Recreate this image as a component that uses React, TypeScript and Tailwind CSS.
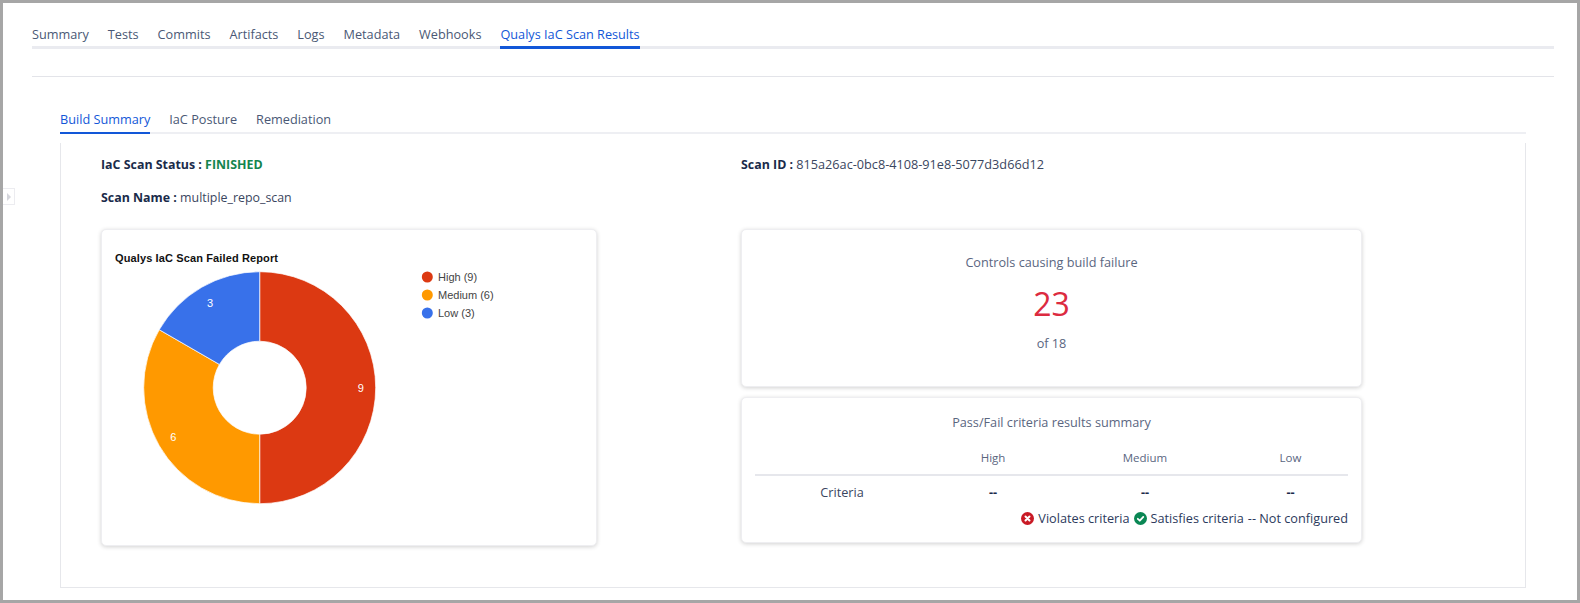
const mainTabs = ["Summary", "Tests", "Commits", "Artifacts", "Logs", "Metadata", "Webhooks", "Qualys IaC Scan Results"];
const subTabs = ["Build Summary", "IaC Posture", "Remediation"];

const arc = (startDeg: number, endDeg: number) => {
  const cx = 157.7;
  const cy = 157.7;
  const r = 116;
  const ir = 46.5;
  const pt = (rad: number, deg: number) => {
    const a = (deg * Math.PI) / 180;
    return `${(cx + rad * Math.sin(a)).toFixed(2)} ${(cy - rad * Math.cos(a)).toFixed(2)}`;
  };
  const large = endDeg - startDeg > 180 ? 1 : 0;
  return `M${pt(r, startDeg)} A${r} ${r} 0 ${large} 1 ${pt(r, endDeg)} L${pt(ir, endDeg)} A${ir} ${ir} 0 ${large} 0 ${pt(ir, startDeg)} Z`;
};

const DonutChart = () => (
  <svg width="494" height="315" viewBox="0 0 494 315" className="block" fontFamily="'Liberation Sans', Arial, sans-serif">
    <text x="13" y="32" fontSize="11" fontWeight="700" fill="#111" textLength="163">Qualys IaC Scan Failed Report</text>
    <path d={arc(0, 180)} fill="#dc3912" stroke="#fff" strokeWidth="0.7" />
    <path d={arc(180, 300)} fill="#ff9900" stroke="#fff" strokeWidth="0.7" />
    <path d={arc(300, 360)} fill="#3871ea" stroke="#fff" strokeWidth="0.7" />
    <text x="258.7" y="161.7" fontSize="11" fill="#fff" textAnchor="middle">9</text>
    <text x="71.3" y="211" fontSize="11" fill="#fff" textAnchor="middle">6</text>
    <text x="108" y="76.7" fontSize="11" fill="#fff" textAnchor="middle">3</text>
    <circle cx="325.3" cy="47" r="5.5" fill="#dc3912" />
    <circle cx="325.3" cy="65" r="5.5" fill="#ff9900" />
    <circle cx="325.3" cy="83" r="5.5" fill="#3871ea" />
    <text x="336" y="51" fontSize="11" fill="#444">High (9)</text>
    <text x="336" y="69" fontSize="11" fill="#444">Medium (6)</text>
    <text x="336" y="87" fontSize="11" fill="#444">Low (3)</text>
  </svg>
);

const ViolatesIcon = () => (
  <svg width="13" height="13" viewBox="0 0 13 13" className="shrink-0">
    <circle cx="6.5" cy="6.5" r="6.5" fill="#c91a25" />
    <path d="M4.5 4.5l4 4M8.5 4.5l-4 4" stroke="#fff" strokeWidth="2" strokeLinecap="round" />
  </svg>
);

const SatisfiesIcon = () => (
  <svg width="13" height="13" viewBox="0 0 13 13" className="shrink-0">
    <circle cx="6.5" cy="6.5" r="6.5" fill="#0a8754" />
    <path d="M3.8 6.8l2 1.9 3.5-3.8" stroke="#fff" strokeWidth="1.8" fill="none" strokeLinecap="round" strokeLinejoin="round" />
  </svg>
);

export default function App() {
  return (
    <div className="relative h-[603px] w-[1580px] overflow-hidden border-x-[3px] border-y-[3px] border-[#a6a6a6] bg-white font-['Open_Sans','Noto_Sans',sans-serif] text-[12.7px] text-[#1a2b4a]">
      {/* sidebar toggle */}
      <div className="absolute left-0 top-[185px] flex h-[17px] w-[12px] items-center justify-center border border-l-0 border-[#ececf0] bg-white">
        <div className="h-0 w-0 border-y-[4px] border-l-[4px] border-y-transparent border-l-[#d5d6dc]"></div>
      </div>

      <div className="pl-[29px] pr-[23px]">
        <div className="flex h-[46px] items-end gap-[19px] border-b-[3px] border-[#eaebf0] pt-[20px]">
          {mainTabs.map((tab) => (
            <div
              key={tab}
              className={
                tab === "Qualys IaC Scan Results"
                  ? "-mb-[3px] h-[25px] border-b-[3px] border-[#1257d8] text-[12.7px] leading-[21px] font-medium text-[#1257d8]"
                  : "-mb-[3px] h-[25px] text-[12.7px] leading-[21px] font-medium text-[#4a5875]"
              }
            >
              {tab}
            </div>
          ))}
        </div>
        <div className="mt-[27px] h-[1px] bg-[#e3e4e9]"></div>
      </div>

      <div className="ml-[57px] mr-[51px] mt-[28px]">
        <div className="flex h-[29px] gap-[19px] border-b-2 border-[#eeeff3]">
          {subTabs.map((tab) => (
            <div
              key={tab}
              className={
                tab === "Build Summary"
                  ? "h-[29px] border-b-2 border-[#1257d8] pt-[4px] text-[12.7px] leading-[21px] font-medium text-[#1257d8]"
                  : "h-[29px] pt-[4px] text-[12.7px] leading-[21px] font-medium text-[#4a5875]"
              }
            >
              {tab}
            </div>
          ))}
        </div>

        <div className="mt-[9px] h-[445px] border-x border-b border-[#e6e7eb] pl-[40px] pr-[40px]">
          <div className="flex h-[86px] pt-[12px]">
            <div className="w-[640px]">
              <div className="h-[33px] leading-[18px]">
                <span className="text-[12.4px] font-bold">IaC Scan Status : </span>
                <span className="text-[12.4px] font-bold text-[#14854f]">FINISHED</span>
              </div>
              <div className="leading-[18px]">
                <span className="text-[12.4px] font-bold">Scan Name : </span>
                <span className="text-[12.4px] text-[#3a4660]">multiple_repo_scan</span>
              </div>
            </div>
            <div className="leading-[18px]">
              <span className="text-[12.4px] font-bold">Scan ID : </span>
              <span className="text-[#3a4660]">815a26ac-0bc8-4108-91e8-5077d3d66d12</span>
            </div>
          </div>

          <div className="flex items-start">
            <div className="h-[317px] w-[496px] rounded-[5px] border border-[#eeeef1] bg-white shadow-[0_1px_4px_rgba(0,0,0,0.18)]">
              <DonutChart />
            </div>

            <div className="ml-[144px] flex w-[621px] flex-col gap-[10px]">
              <div className="flex h-[158px] flex-col items-center rounded-[5px] border border-[#eeeef1] bg-white pt-[22px] text-[#5a667f] shadow-[0_1px_4px_rgba(0,0,0,0.18)]">
                <div className="font-medium leading-[20px]">Controls causing build failure</div>
                <div className="mt-[10px] text-[32px] leading-[44px] text-[#dc2b40]">23</div>
                <div className="mt-[7px] leading-[20px]">of 18</div>
              </div>

              <div className="h-[146px] rounded-[5px] border border-[#eeeef1] bg-white px-[13px] pt-[14px] shadow-[0_1px_4px_rgba(0,0,0,0.18)]">
                <div className="text-center font-medium leading-[20px] text-[#5a667f]">Pass/Fail criteria results summary</div>
                <div className="mt-[17px] grid h-[27px] grid-cols-[174px_128px_176px_1fr] border-b-2 border-[#e6e7ec] text-center text-[11.5px] leading-[18px] font-medium text-[#5a667f]">
                  <div></div>
                  <div>High</div>
                  <div>Medium</div>
                  <div>Low</div>
                </div>
                <div className="grid h-[33px] grid-cols-[174px_128px_176px_1fr] items-center text-center text-[#3a4660]">
                  <div>Criteria</div>
                  <div className="font-bold text-[#1a2b4a]">--</div>
                  <div className="font-bold text-[#1a2b4a]">--</div>
                  <div className="font-bold text-[#1a2b4a]">--</div>
                </div>
                <div className="flex items-center justify-end gap-[4px] text-[12.7px] leading-[18px] text-[#2c3a5c]">
                  <ViolatesIcon />
                  <span>Violates criteria</span>
                  <SatisfiesIcon />
                  <span>Satisfies criteria</span>
                  <span>-- Not configured</span>
                </div>
              </div>
            </div>
          </div>
        </div>
      </div>
    </div>
  );
}
